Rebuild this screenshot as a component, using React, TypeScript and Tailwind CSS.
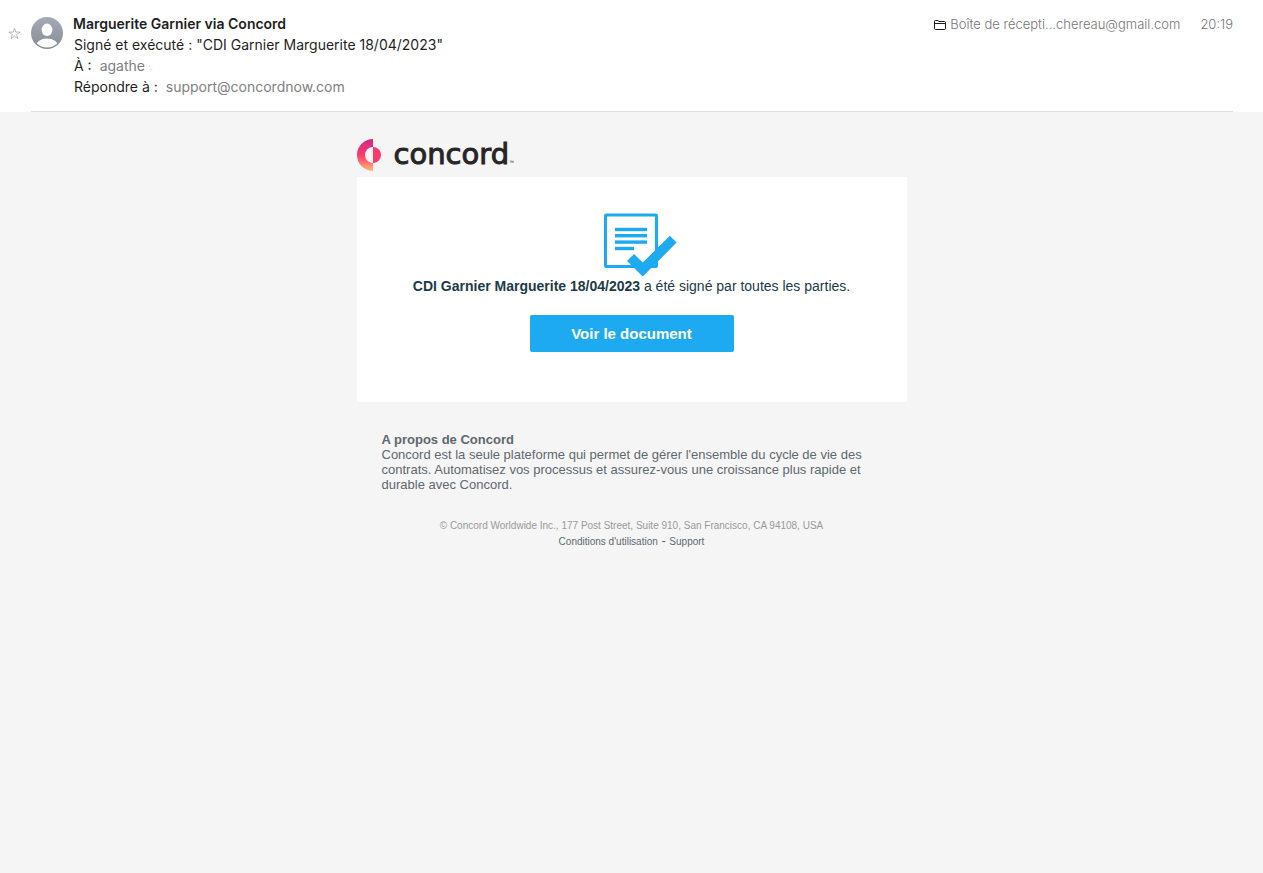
import React, { useState } from 'react';

const SANS = 'font-["Liberation_Sans",Arial,sans-serif]';

function Avatar() {
  return (
    <svg viewBox="0 0 32 32" className="w-8 h-8 shrink-0" aria-hidden="true">
      <defs>
        <linearGradient id="avatar-bg" x1="0" y1="0" x2="0" y2="1">
          <stop offset="0" stopColor="#a4aab6" />
          <stop offset="1" stopColor="#868b97" />
        </linearGradient>
        <clipPath id="avatar-clip">
          <circle cx="16" cy="16" r="14.6" />
        </clipPath>
      </defs>
      <circle cx="16" cy="16" r="16" fill="url(#avatar-bg)" />
      <ellipse cx="16" cy="12.8" rx="5.4" ry="6.2" fill="#fff" />
      <ellipse cx="16" cy="29" rx="11.2" ry="7.6" fill="#fff" clipPath="url(#avatar-clip)" />
    </svg>
  );
}

function FolderIcon() {
  return (
    <svg viewBox="0 0 12 10" className="w-3 h-[10px] shrink-0" fill="none" stroke="#1c1c1c" aria-hidden="true">
      <path d="M.5 8.5v-7a1 1 0 0 1 1-1h2.3l1.2 1h5.5a1 1 0 0 1 1 1v6a1 1 0 0 1-1 1h-9a1 1 0 0 1-1-1z" />
      <path d="M.5 3.5h11" />
    </svg>
  );
}

function ConcordMark() {
  return (
    <svg viewBox="0 0 24 32" className="w-6 h-8 shrink-0" aria-hidden="true">
      <defs>
        <linearGradient id="mark" gradientUnits="userSpaceOnUse" x1="0" y1="0" x2="0" y2="32">
          <stop offset="0" stopColor="#cc2a86" />
          <stop offset=".5" stopColor="#fb3a6b" />
          <stop offset=".65" stopColor="#ff5c6c" />
          <stop offset="1" stopColor="#ffbe79" />
        </linearGradient>
      </defs>
      <path d="M16 0A16 16 0 0 0 16 32V24A8 8 0 0 1 16 8Z" fill="url(#mark)" />
      <path d="M16 8A8 8 0 0 1 16 24Z" fill="#fb3a6b" />
    </svg>
  );
}

function SignedDocument() {
  return (
    <svg viewBox="-16 0 90 64" className="w-[90px] h-16" fill="none" aria-hidden="true">
      <rect x="2.5" y="2" width="51" height="51.5" rx="1" stroke="#1eaaf1" strokeWidth="3" />
      <g fill="#1eaaf1">
        <rect x="12" y="14.8" width="32" height="3.4" />
        <rect x="12" y="21" width="32" height="3.4" />
        <rect x="12" y="27.4" width="32" height="3.4" />
        <rect x="12" y="33.8" width="19" height="3.4" />
      </g>
      <path d="M24 48l7-7 8.7 8.6L66.8 22.8l6.8 6.8L39.7 63.6z" fill="#1eaaf1" />
    </svg>
  );
}

export default function App() {
  const [starred, setStarred] = useState(false);

  return (
    <div className="min-h-screen flex flex-col bg-[#f5f5f5]">
      <header className="bg-white pl-2 pr-[30px] font-[Inter,sans-serif] text-sm leading-[21px] text-[#1f1f1f]">
        <div className="flex items-start pt-[13px] pb-[14px]">
          <button
            aria-label="Marquer comme favori"
            aria-pressed={starred}
            onClick={() => setStarred(!starred)}
            className="mt-[14px] w-[13px] h-[13px] shrink-0 cursor-pointer"
          >
            <svg viewBox="0 0 13 13" fill={starred ? '#b0b0b0' : 'none'} stroke="#b0b0b0" strokeWidth=".9">
              <path d="M6.5 1.1l1.3 4h4.3L8.6 7.6l1.3 4.1-3.4-2.5-3.4 2.5 1.3-4.1L.9 5.1h4.3z" />
            </svg>
          </button>
          <div className="ml-[10px] mt-1">
            <Avatar />
          </div>
          <div className="ml-[10px] min-w-0 flex-1">
            <h1 className="font-semibold">Marguerite Garnier via Concord</h1>
            <div className="pl-px">
              <p>Signé et exécuté : "CDI Garnier Marguerite 18/04/2023"</p>
              <p className="flex items-center">
                À :<span className="ml-2 text-[#808080]">agathe</span>
                <svg viewBox="0 0 4 6" className="ml-1 mt-1 w-1 h-[6px]" fill="none" stroke="#c8c8c8" aria-hidden="true">
                  <path d="M.6 .5v1.6M1.6 3.6l1.6 1.8" strokeWidth=".8" />
                </svg>
              </p>
              <p>
                Répondre à :
                <a href="mailto:support@concordnow.com" className="ml-2 text-[#808080]">support@concordnow.com</a>
              </p>
            </div>
          </div>
          <div className="mt-px flex items-center text-[13px] font-light text-[#757575] shrink-0">
            <FolderIcon />
            <span className="ml-1">Boîte de récepti...chereau@gmail.com</span>
            <time className="ml-5">20:19</time>
          </div>
        </div>
        <div className="ml-[23px] border-b border-[#e2e2e2]" />
      </header>

      <main className={`w-full max-w-[550px] mx-auto pt-[27px] ${SANS}`}>
        <div className="flex items-center h-8">
          <ConcordMark />
          <div className="ml-[13px] pb-[2px] flex items-end text-[#262626]">
            <span className="font-['DejaVu_Sans',sans-serif] text-[29px] leading-8 [-webkit-text-stroke:1px_#262626]">concord</span>
            <span className="text-[5px] leading-4">™</span>
          </div>
        </div>

        <section className="mt-[6px] bg-white flex flex-col items-center pt-9 pb-[50px] text-[#1c3a47]">
          <SignedDocument />
          <p className="text-sm leading-[18px]">
            <strong>CDI Garnier Marguerite 18/04/2023</strong> a été signé par toutes les parties.
          </p>
          <a
            href="#document"
            className="mt-5 w-[204px] h-[37px] pt-px flex items-center justify-center rounded-xs bg-[#1eaaf1] text-[15px] font-bold text-white"
          >
            Voir le document
          </a>
        </section>

        <footer>
          <div className="px-[25px] pt-[30px] text-[13px] leading-[15px] text-[#5e686e]">
            <h2 className="font-bold">A propos de Concord</h2>
            <p>
              Concord est la seule plateforme qui permet de gérer l'ensemble du cycle de vie des contrats. Automatisez
              vos processus et assurez-vous une croissance plus rapide et durable avec Concord.
            </p>
          </div>
          <div className="pt-[26px] pb-6 text-center text-[10px] leading-[15px] text-[#5e686e]">
            <p className="text-[#999]">© Concord Worldwide Inc., 177 Post Street, Suite 910, San Francisco, CA 94108, USA</p>
            <p>
              <a href="#conditions">Conditions d'utilisation</a>
              <span className="text-[13px]"> - </span>
              <a href="#support">Support</a>
            </p>
          </div>
        </footer>
      </main>
    </div>
  );
}
